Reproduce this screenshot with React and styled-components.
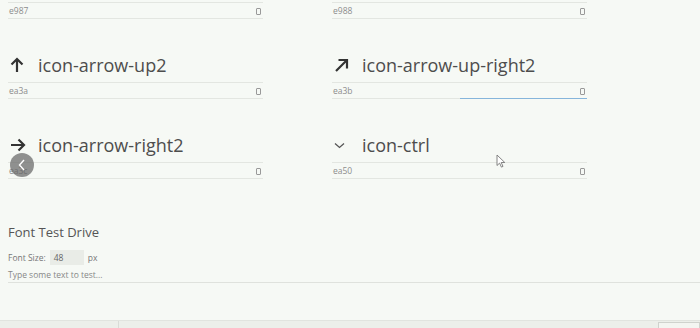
import React from 'react'
import styled, { createGlobalStyle } from 'styled-components'

const GlobalStyle = createGlobalStyle`
  html, body {
    margin: 0;
    padding: 0;
    background: #f6f9f5;
  }
  body {
    font-family: "Open Sans", "Noto Sans", sans-serif;
    color: #555;
  }
`

const Page = styled.div`
  position: relative;
  width: 700px;
  height: 328px;
  overflow: hidden;
  display: flex;
  flex-direction: column;
`

const Content = styled.div`
  flex: 1;
  padding: 2px 0 0 8px;
`

const Grid = styled.div`
  display: grid;
  grid-template-columns: 255px 255px;
  column-gap: 69px;
`

const Glyph = styled.div`
  display: flex;
  flex-direction: column;
`

const Title = styled.div`
  height: 63px;
  display: flex;
  align-items: flex-end;
  padding-bottom: 4px;
  box-sizing: border-box;
  font-size: 18px;
  color: #4d4d4d;
  white-space: nowrap;
`

const IconBox = styled.span`
  width: 28px;
  display: inline-flex;
  align-items: center;
  justify-content: flex-start;
  padding-left: 2px;
  height: 26px;
`

const Name = styled.span`
  line-height: 26px;
`

const Fieldset = styled.div`
  display: flex;
  height: 15px;
  border-top: 1px solid #e3e6e1;
  border-bottom: 1px solid #e3e6e1;
  font-size: 8.5px;
  color: #8d8d8d;
  line-height: 15px;
`

const Half = styled.div`
  flex: 1;
  padding: 0 1px;
  text-align: ${p => (p.right ? 'right' : 'left')};
  position: relative;
  ${p => p.focused && `
    &::after {
      content: '';
      position: absolute;
      left: 0;
      right: 0;
      bottom: -1px;
      height: 1px;
      background: #86b5db;
    }
  `}
`

const Missing = styled.span`
  display: inline-block;
  width: 3px;
  height: 5px;
  border: 1px solid #999;
  border-radius: 1px;
  margin-right: 1px;
  vertical-align: middle;
`

const TestDrive = styled.section`
  margin-top: 44px;
`

const Heading = styled.h2`
  margin: 0 0 9px;
  font-size: 13px;
  font-weight: normal;
  color: #555;
`

const SizeRow = styled.div`
  display: flex;
  align-items: center;
  font-size: 8.5px;
  color: #777;
  gap: 4px;
`

const SizeInput = styled.span`
  display: inline-block;
  width: 30px;
  height: 15px;
  line-height: 15px;
  padding-left: 4px;
  background: #e9ece7;
  color: #666;
`

const TextLine = styled.div`
  margin-top: 4px;
  font-size: 8.5px;
  color: #888;
  padding-bottom: 2px;
  border-bottom: 1px solid #dfe2dd;
`

const BottomBar = styled.div`
  height: 7px;
  border-top: 1px solid #e1e4df;
  background: #ecefea;
  display: flex;
`

const BarDivider = styled.div`
  width: 118px;
  border-right: 1px solid #d9dcd7;
`

const BarButton = styled.div`
  margin-left: auto;
  width: 40px;
  margin-top: 1px;
  border: 1px solid #cfd2cd;
  border-bottom: none;
  background: #f3f5f1;
`

const PrevButton = styled.div`
  position: absolute;
  left: 10px;
  top: 153px;
  width: 24px;
  height: 24px;
  border-radius: 50%;
  background: rgba(100, 100, 100, 0.7);
  display: flex;
  align-items: center;
  justify-content: center;
`

const Cursor = styled.svg`
  position: absolute;
  left: 496px;
  top: 154px;
`

const ArrowUp = () => (
  <svg width="14" height="16" viewBox="0 0 14 16">
    <path d="M7 15V2M1.5 7.5L7 2l5.5 5.5" fill="none" stroke="#333" strokeWidth="2.2" />
  </svg>
)

const ArrowUpRight = () => (
  <svg width="15" height="15" viewBox="0 0 15 15">
    <path d="M2 13L13 2M4.5 2H13v8.5" fill="none" stroke="#333" strokeWidth="2.2" />
  </svg>
)

const ArrowRight = () => (
  <svg width="16" height="14" viewBox="0 0 16 14">
    <path d="M1 7h13M8.5 1.5L14 7l-5.5 5.5" fill="none" stroke="#333" strokeWidth="2.2" />
  </svg>
)

const Chevron = () => (
  <svg width="11" height="7" viewBox="0 0 11 7">
    <path d="M1 1.5l4.5 4 4.5-4" fill="none" stroke="#555" strokeWidth="1.3" />
  </svg>
)

const rows = [
  [
    { code: 'e987' },
    { code: 'e988' }
  ],
  [
    { code: 'ea3a', name: 'icon-arrow-up2', Icon: ArrowUp },
    { code: 'ea3b', name: 'icon-arrow-up-right2', Icon: ArrowUpRight, focused: true }
  ],
  [
    { code: 'ea3c', name: 'icon-arrow-right2', Icon: ArrowRight },
    { code: 'ea50', name: 'icon-ctrl', Icon: Chevron }
  ]
]

export default function App () {
  return (
    <Page>
      <GlobalStyle />
      <Content>
        <Grid>
          {rows.flat().map(g => (
            <Glyph key={g.code}>
              {g.name && (
                <Title>
                  <IconBox><g.Icon /></IconBox>
                  <Name>{g.name}</Name>
                </Title>
              )}
              <Fieldset>
                <Half>{g.code}</Half>
                <Half right focused={g.focused}><Missing /></Half>
              </Fieldset>
            </Glyph>
          ))}
        </Grid>
        <TestDrive>
          <Heading>Font Test Drive</Heading>
          <SizeRow>
            <span>Font Size:</span>
            <SizeInput>48</SizeInput>
            <span>px</span>
          </SizeRow>
          <TextLine>Type some text to test...</TextLine>
        </TestDrive>
      </Content>
      <BottomBar>
        <BarDivider />
        <BarButton />
      </BottomBar>
      <PrevButton>
        <svg width="8" height="12" viewBox="0 0 8 12">
          <path d="M6 1L1.5 6 6 11" fill="none" stroke="#fff" strokeWidth="1.4" />
        </svg>
      </PrevButton>
      <Cursor width="10" height="14" viewBox="0 0 10 14">
        <path d="M1 1v10.5l2.6-2.4 1.8 4 1.6-.7-1.8-3.9H8.8z" fill="#fff" stroke="#777" strokeWidth="0.9" />
      </Cursor>
    </Page>
  )
}
